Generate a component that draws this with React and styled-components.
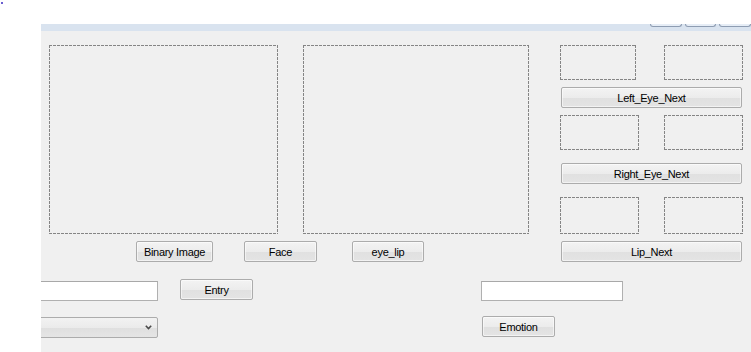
import React from 'react';
import styled, { createGlobalStyle } from 'styled-components';

const GlobalStyle = createGlobalStyle`
  html, body {
    margin: 0;
    padding: 0;
    background: #ffffff;
    overflow: hidden;
  }
  body {
    font-family: 'Liberation Sans', Arial, sans-serif;
    font-size: 11px;
    color: #000;
  }
`;

const Page = styled.div`
  width: 751px;
  height: 352px;
  overflow: hidden;
`;

// stray pixel in the top-left corner of the capture
const Speck = styled.div`
  width: 2px;
  height: 2px;
  margin: 2px 0 0 1px;
  background: #6a5fd0;
`;

const Window = styled.div`
  margin: 20px 0 0 41px;
  width: 710px;
  height: 328px;
  display: flex;
  flex-direction: column;
`;

const TitleStrip = styled.div`
  height: 7px;
  background: #d9e3ef;
  display: flex;
  justify-content: flex-end;
  align-items: flex-start;
  gap: 3px;
`;

const CaptionButton = styled.div`
  width: ${(p) => p.$w}px;
  height: 2px;
  border: 1px solid #8e9db2;
  border-top: none;
  border-radius: 0 0 3px 3px;
  background: #e6edf6;
`;

const Body = styled.div`
  flex: 1;
  background: #f0f0f0;
  display: flex;
  padding-top: 14px;
  overflow: hidden;
`;

const LeftArea = styled.div`
  width: 519px;
  display: flex;
  flex-direction: column;
`;

const dash = (dir) =>
  `repeating-linear-gradient(${dir}, #858585 0 3px, transparent 3px 4px)`;

const DashedBox = styled.div`
  box-sizing: border-box;
  width: ${(p) => p.$w}px;
  height: ${(p) => p.$h}px;
  background:
    ${dash('90deg')} top left / 100% 1px no-repeat,
    ${dash('90deg')} bottom left / 100% 1px no-repeat,
    ${dash('180deg')} top left / 1px 100% no-repeat,
    ${dash('180deg')} top right / 1px 100% no-repeat;
`;

const ImagesRow = styled.div`
  display: flex;
  gap: 25px;
  padding-left: 8px;
`;

const ButtonsRow = styled.div`
  display: flex;
  margin-top: 7px;
`;

const Button = styled.button`
  box-sizing: border-box;
  width: ${(p) => p.$w}px;
  height: 21px;
  margin: ${(p) => p.$mt || 0}px 0 0 ${(p) => p.$ml || 0}px;
  padding: 1px 0 0;
  border: 1px solid #acacac;
  border-radius: 2px;
  background: linear-gradient(to bottom, #f3f3f3 0%, #ececec 50%, #e0e0e0 51%, #e4e4e4 100%);
  box-shadow: inset 0 0 0 1px rgba(255, 255, 255, 0.55);
  font-family: 'Liberation Sans', Arial, sans-serif;
  font-size: 11px;
  letter-spacing: -0.3px;
  line-height: 16px;
  color: #000;
  text-align: center;
  cursor: default;
`;

const Controls = styled.div`
  display: grid;
  grid-template-columns: 117px 22px 73px 228px 142px;
  grid-template-rows: 21px 21px;
  row-gap: 16px;
  margin-top: 17px;
`;

const TextBox = styled.input`
  box-sizing: border-box;
  grid-column: ${(p) => p.$col};
  grid-row: ${(p) => p.$row};
  align-self: start;
  width: ${(p) => p.$w}px;
  height: 20px;
  margin: 2px 0 0 ${(p) => p.$ml || 0}px;
  padding: 0 3px;
  border: 1px solid #b0b0b0;
  border-top-color: #a8a8a8;
  background: #fff;
  outline: none;
`;

const Combo = styled.div`
  box-sizing: border-box;
  grid-column: 1;
  grid-row: 2;
  width: 130px;
  height: 21px;
  margin: 1px 0 0 -13px;
  border: 1px solid #acacac;
  border-radius: 2px;
  background: linear-gradient(to bottom, #f2f2f2 0%, #ebebeb 50%, #dfdfdf 51%, #e5e5e5 100%);
  display: flex;
  align-items: center;
  justify-content: flex-end;
  padding-right: 5px;
`;

const GridButton = styled(Button)`
  grid-column: ${(p) => p.$col};
  grid-row: ${(p) => p.$row};
`;

const RightColumn = styled.div`
  width: 183px;
  display: flex;
  flex-direction: column;
`;

const PairRow = styled.div`
  display: flex;
  justify-content: space-between;
  margin-top: ${(p) => p.$mt || 0}px;
`;

const Chevron = () => (
  <svg width="7" height="5" viewBox="0 0 7 5">
    <polyline points="0.8,0.8 3.5,3.6 6.2,0.8" fill="none" stroke="#4a4a4a" strokeWidth="1.6" />
  </svg>
);

export default function App() {
  return (
    <Page>
      <GlobalStyle />
      <Speck />
      <Window>
        <TitleStrip>
          <CaptionButton $w={30} />
          <CaptionButton $w={29} />
          <CaptionButton $w={30} />
        </TitleStrip>
        <Body>
          <LeftArea>
            <ImagesRow>
              <DashedBox $w={229} $h={189} />
              <DashedBox $w={226} $h={189} />
            </ImagesRow>
            <ButtonsRow>
              <Button $w={77} $ml={95}>Binary Image</Button>
              <Button $w={73} $ml={31}>Face</Button>
              <Button $w={72} $ml={35}>eye_lip</Button>
            </ButtonsRow>
            <Controls>
              <TextBox $col={1} $row={1} $w={130} $ml={-13} />
              <GridButton $col={3} $row={1} $w={73}>Entry</GridButton>
              <TextBox $col={5} $row={1} $w={142} />
              <Combo>
                <Chevron />
              </Combo>
              <GridButton $col={5} $row={2} $w={73} $ml={1}>Emotion</GridButton>
            </Controls>
          </LeftArea>
          <RightColumn>
            <PairRow>
              <DashedBox $w={76} $h={35} />
              <DashedBox $w={79} $h={35} />
            </PairRow>
            <Button $w={181} $ml={1} $mt={7}>Left_Eye_Next</Button>
            <PairRow $mt={7}>
              <DashedBox $w={79} $h={35} />
              <DashedBox $w={79} $h={35} />
            </PairRow>
            <Button $w={181} $ml={1} $mt={13}>Right_Eye_Next</Button>
            <PairRow $mt={13}>
              <DashedBox $w={79} $h={37} />
              <DashedBox $w={79} $h={37} />
            </PairRow>
            <Button $w={181} $ml={1} $mt={7}>Lip_Next</Button>
          </RightColumn>
        </Body>
      </Window>
    </Page>
  );
}
